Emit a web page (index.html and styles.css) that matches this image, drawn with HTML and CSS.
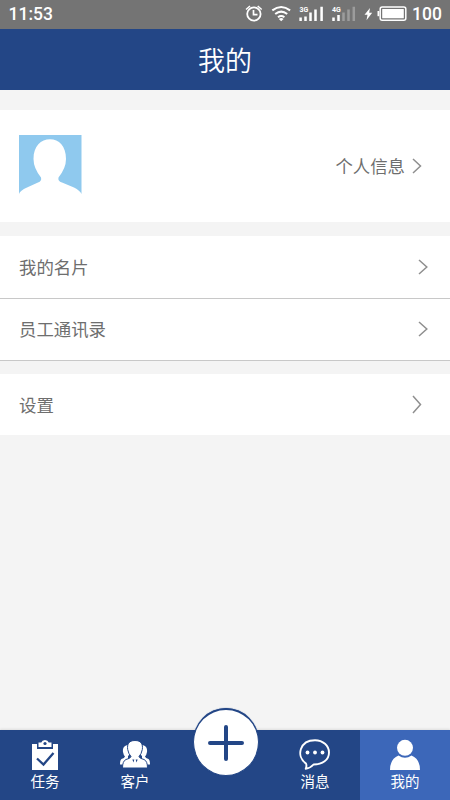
FILE: index.html
```html
<!DOCTYPE html>
<html lang="zh-CN">
<head>
<meta charset="utf-8">
<title>我的</title>
<link rel="stylesheet" href="styles.css">
</head>
<body>
<div class="app">
  <div class="status">
    <span class="time">11:53</span>
    <svg class="indicators" width="176" height="29" viewBox="0 0 176 29" fill="none" stroke="#fff">
      <circle cx="18.900" cy="14" r="6.700" stroke-width="1.800"/>
      <path d="M18.500 10v4.700h4" stroke-width="1.700"/>
      <path d="M11 9.500l4-3.500M26.700 9.500l-4-3.500" stroke-width="1.500"/>
      <path d="M37.300 10.400Q46.200 3.500 55.100 10.400M40.200 14Q46.200 9.200 52.200 14M43 17.300Q46.200 14.800 49.400 17.300" stroke-width="2"/>
      <path d="M43.800 18.900Q46.200 17.200 48.600 18.900L46.200 21.200z" fill="#fff" stroke="none"/>
      <path d="M65.600 21v-3.500M70.500 21v-4.500M75.500 21v-8.500M80.500 21V9.500M86.600 21V6.700" stroke-width="2.500"/>
      <path d="M98.500 21v-3.500M103.500 21v-6" stroke-width="2.500"/>
      <path d="M108.500 21v-8.500M113.500 21V9.500M118.800 21V6.700" stroke="#9c9c9c" stroke-width="2.500"/>
      <text class="network" x="64.500" y="11.500">3G</text>
      <text class="network" x="97" y="11.500">4G</text>
      <path d="M135 8l-5.500 6.700h3l-1 5.500 5.700-7.400h-3z" fill="#fff" stroke="none"/>
      <rect x="145.200" y="6.900" width="25.600" height="13.400" rx="2" stroke-width="1.500"/>
      <rect x="147.200" y="9" width="21.600" height="9.200" rx=".5" fill="#fff" stroke="none"/>
      <path d="M143.400 11v5.200" stroke-width="1.800"/>
    </svg>
    <span class="level">100</span>
  </div>
  <header class="header">我的</header>
  <main class="main">
    <section class="profile">
      <svg class="avatar" width="63" height="60" viewBox="0 0 63 60">
        <path d="M0 0H62.500V59Q61 55.500 55 52.500L43 47.500Q38.500 46 39.500 42.500Q47 33 47 24C47 11 40 4.300 31 4.300S14.500 11 14.500 24Q14.500 33 22 42.500Q23 46 19 47.500L8 52.500Q1 55.500 0 59z" fill="#8fc9ee"/>
      </svg>
      <span class="profile-link">个人信息</span>
      <svg class="chevron" width="10" height="16" viewBox="0 0 10 16"><path d="M1 1l7.500 7L1 15"/></svg>
    </section>
    <section class="list">
      <div class="row"><span>我的名片</span><svg class="chevron" width="10" height="16" viewBox="0 0 10 16"><path d="M1 1l7.800 7L1 15"/></svg></div>
      <div class="row"><span>员工通讯录</span><svg class="chevron" width="10" height="16" viewBox="0 0 10 16"><path d="M1 1l7.800 7L1 15"/></svg></div>
    </section>
    <section class="settings"><span>设置</span><svg class="chevron" width="10" height="19" viewBox="0 0 10 19"><path d="M1 1l7.500 8.500L1 18"/></svg></section>
  </main>
  <nav class="tabs">
    <div class="tab">
      <svg width="32" height="32" viewBox="0 0 32 32">
        <path d="M3 5h26v26H3z" fill="#fff"/>
        <path d="M8 4h16v6H8z" fill="#234686"/>
        <path d="M9.500 3.500h2.800Q13 1 16 1t3.700 2.500h2.800V8h-13z" fill="#fff"/>
        <circle cx="16" cy="4.500" r="1.600" fill="#234686"/>
        <path d="M8 19.500l6.500 6L24.500 14" fill="none" stroke="#234686" stroke-width="2.300"/>
      </svg>
      <span>任务</span>
    </div>
    <div class="tab">
      <svg width="32" height="32" viewBox="0 0 32 32" fill="#fff">
        <path d="M11 6C5 5.500 3.500 9 4 13Q4.500 16 6 17.500Q5.500 19 2.500 20Q1 21 1 25.500h8V17l3-3z"/>
        <path d="M21 6C27 5.500 28.500 9 28 13Q27.500 16 26 17.500Q26.500 19 29.500 20Q31 21 31 25.500h-8V17l-3-3z"/>
        <path d="M16 1.500C9.500 1.500 8 5.500 8.700 10.500Q9.500 15 12 17.500Q11.500 19.500 7 20.500Q3.500 22 3.500 29h25Q28.500 22 25 20.500Q20.500 19.500 20 17.500Q22.500 15 23.300 10.500C24 5.500 22.500 1.500 16 1.500z" stroke="#234686" stroke-width="1"/>
        <path d="M13.300 20.500h2l-.7 3zM16.700 20.500h2l-1.300 3z" fill="#234686"/>
      </svg>
      <span>客户</span>
    </div>
    <div class="tab add-slot">
      <div class="add"><svg width="36" height="36" viewBox="0 0 36 36"><path d="M18 2v32M2 18h32" fill="none" stroke="#234686" stroke-width="4" stroke-linecap="round"/></svg></div>
    </div>
    <div class="tab">
      <svg width="32" height="32" viewBox="0 0 32 32">
        <path d="M7 24.500C-3.500 17 1 1.200 16 1.200c8 0 14 5.500 14 12.300C30 21 23.500 25.500 14.500 25.500Q11.500 29 6.700 29.800Q8 27 7 24.500z" fill="none" stroke="#fff" stroke-width="1.900" stroke-linejoin="round"/>
        <g fill="#fff"><circle cx="8.500" cy="13.500" r="1.900"/><circle cx="16" cy="13.500" r="1.900"/><circle cx="23.500" cy="13.500" r="1.900"/></g>
      </svg>
      <span>消息</span>
    </div>
    <div class="tab active">
      <svg width="32" height="32" viewBox="0 0 32 32" fill="#fff">
        <circle cx="16" cy="8.800" r="8"/>
        <path d="M1 31Q1 20 9.500 16.500Q16 21 22.500 16.500Q31 20 31 31z"/>
      </svg>
      <span>我的</span>
    </div>
  </nav>
</div>
</body>
</html>
```

FILE: styles.css
```css
* { box-sizing: border-box; }
body { margin: 0; }
svg { display: block; flex: none; }

.app {
  height: 800px;
  display: flex;
  flex-direction: column;
  background: #f4f4f4;
  color: #6e6e6e;
  font: 400 17.400px/26px "Noto Sans CJK SC", sans-serif;
}

.status {
  height: 29px;
  display: flex;
  align-items: center;
  padding: 0 7px 0 8.500px;
  background: #747474;
  color: #fff;
  font: 500 17.500px/29px Roboto, sans-serif;
}
.indicators { margin-left: auto; }
.level { width: 31px; margin-left: 1px; }
.network { font: 700 7px Roboto, sans-serif; fill: #fff; stroke: none; }

.header {
  height: 61px;
  background: #234686;
  color: #fff;
  font-size: 27px;
  font-weight: 350;
  line-height: 61px;
  text-align: center;
}

.main { flex: 1; padding-top: 20px; }
.chevron { fill: none; stroke: #8f8f8f; stroke-width: 1.500; }

.profile {
  height: 112px;
  display: flex;
  align-items: center;
  padding: 0 28px 0 19px;
  background: #fff;
}
.avatar { margin-top: -2px; }
.profile-link { margin-left: auto; margin-right: 7px; }

.list { margin: 14px 0 13px; }
.row, .settings {
  display: flex;
  align-items: center;
  justify-content: space-between;
  padding: 0 22px 0 19px;
  background: #fff;
}
.row { height: 62.500px; border-bottom: 1px solid #c8c8c8; }
.settings { height: 61px; padding-right: 28px; }

.tabs {
  height: 70px;
  display: grid;
  grid-template-columns: repeat(5, 1fr);
  background: #234686;
  box-shadow: 0 -1px 2px #ddd;
  color: #fff;
  font-size: 14.500px;
  line-height: 20px;
}
.tab {
  display: flex;
  flex-direction: column;
  align-items: center;
  padding-top: 9px;
}
.active { background: #3c67b9; }
.add-slot { padding-top: 0; }
.add {
  width: 66px;
  height: 68px;
  display: flex;
  align-items: center;
  justify-content: center;
  margin: -22px 0 0 1px;
  border: 1px solid #234686;
  border-top-width: 2px;
  border-radius: 50%;
  background: #fff;
  box-shadow: 0 0 1px #234686;
}
```
